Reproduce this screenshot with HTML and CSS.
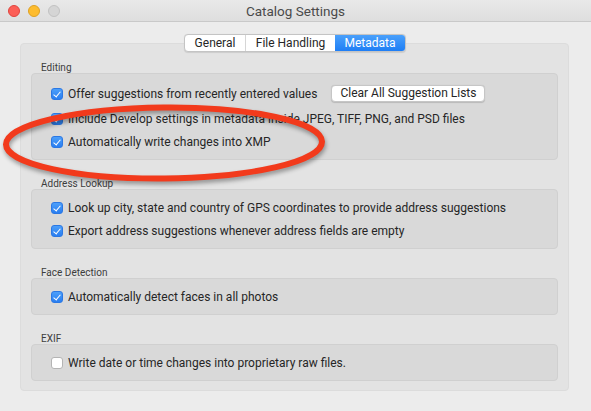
FILE: index.html
```html
<!DOCTYPE html>
<html lang="en">
<head>
<meta charset="utf-8">
<title>Catalog Settings</title>
<link rel="stylesheet" href="styles.css">
</head>
<body>
<div class="window">
  <div class="titlebar">
    <div class="lights">
      <span class="light red"></span>
      <span class="light yellow"></span>
      <span class="light gray"></span>
    </div>
    <div class="title">Catalog Settings</div>
  </div>
  <div class="content">
    <div class="tabs">
      <span class="tab tab-general">General</span>
      <span class="tab tab-file">File Handling</span>
      <span class="tab tab-meta active">Metadata</span>
    </div>
    <div class="panel">
      <section class="section">
        <div class="label">Editing</div>
        <div class="group">
          <div class="row row-first">
            <span class="cb on"></span><span class="text">Offer suggestions from recently entered values</span>
            <button class="btn">Clear All Suggestion Lists</button>
          </div>
          <div class="row"><span class="cb on"></span><span class="text">Include Develop settings in metadata inside JPEG, TIFF, PNG, and PSD files</span></div>
          <div class="row"><span class="cb on"></span><span class="text">Automatically write changes into XMP</span></div>
        </div>
      </section>
      <section class="section">
        <div class="label">Address Lookup</div>
        <div class="group">
          <div class="row"><span class="cb on"></span><span class="text">Look up city, state and country of GPS coordinates to provide address suggestions</span></div>
          <div class="row"><span class="cb on"></span><span class="text">Export address suggestions whenever address fields are empty</span></div>
        </div>
      </section>
      <section class="section">
        <div class="label">Face Detection</div>
        <div class="group">
          <div class="row"><span class="cb on"></span><span class="text">Automatically detect faces in all photos</span></div>
        </div>
      </section>
      <section class="section">
        <div class="label">EXIF</div>
        <div class="group">
          <div class="row"><span class="cb"></span><span class="text">Write date or time changes into proprietary raw files.</span></div>
        </div>
      </section>
    </div>
  </div>
  <svg class="annotation" width="591" height="411" viewBox="0 0 591 411">
    <ellipse cx="164" cy="143" rx="158" ry="35.5" fill="none" stroke="#f23a1c" stroke-width="6" transform="rotate(-0.5 164 143)"/>
  </svg>
</div>
</body>
</html>
```
FILE: styles.css
```css
html, body {
  margin: 0;
  padding: 0;
}
body {
  width: 591px;
  height: 411px;
  overflow: hidden;
  background: #ececec;
  font-family: Roboto, "Liberation Sans", sans-serif;
  color: #262626;
}
.window {
  position: relative;
  width: 591px;
  height: 411px;
  background: #ececec;
}
.titlebar {
  height: 22px;
  box-sizing: border-box;
  border-bottom: 1px solid #c9c9c9;
  background: linear-gradient(#e9e9e9, #dedede);
  display: flex;
  align-items: center;
  position: relative;
}
.lights {
  display: flex;
  gap: 8px;
  padding-left: 8px;
  position: absolute;
  left: 0;
  top: 5px;
}
.light {
  width: 12px;
  height: 12px;
  border-radius: 50%;
  box-sizing: border-box;
}
.red { background: #fc5f57; border: 1px solid #e0443e; }
.yellow { background: #fdbc2e; border: 1px solid #dea123; }
.gray { background: #d5d5d5; border: 1px solid #c2c2c2; }
.title {
  flex: 1;
  text-align: center;
  font-size: 13.5px;
  color: #4a4a4a;
  padding-left: 0;
}
.content {
  padding: 12px 22px 0 20px;
  display: flex;
  flex-direction: column;
  align-items: center;
}
.tabs {
  display: flex;
  height: 18px;
  box-sizing: border-box;
  border: 1px solid #c4c4c4;
  border-radius: 4px;
  background: #fff;
  position: relative;
  z-index: 1;
  margin-bottom: -9px;
  margin-left: 1px;
  overflow: hidden;
  box-shadow: 0 0.5px 1px rgba(0,0,0,0.1);
}
.tab {
  font-size: 12px;
  line-height: 16px;
  text-align: center;
  color: #262626;
  box-sizing: border-box;
}
.tab-general { width: 61px; border-right: 1px solid #d6d6d6; }
.tab-file { width: 89px; }
.tab-meta { width: 70px; }
.tab.active {
  background: linear-gradient(#4aa0fb, #1e7ef5);
  color: #fff;
}
.panel {
  align-self: stretch;
  height: 348px;
  box-sizing: border-box;
  background: #e3e3e3;
  border: 1px solid #dcdcdc;
  border-radius: 4px;
  padding: 19px 10px 0 10px;
  display: flex;
  flex-direction: column;
  gap: 19px;
}
.label {
  font-size: 10px;
  line-height: 10px;
  color: #3d3d3d;
  padding-left: 10px;
}
.group {
  background: #d9d9d9;
  border: 1px solid #d0d0d0;
  border-radius: 4px;
  padding: 6px 0 6px 19px;
}
.row {
  height: 23px;
  display: flex;
  align-items: center;
}
.row-first { height: 27px; }
.cb {
  width: 12px;
  height: 12px;
  box-sizing: border-box;
  border-radius: 3px;
  background: #fff;
  border: 1px solid #b4b4b4;
  margin-right: 5px;
  flex: none;
  position: relative;
}
.cb.on {
  background: linear-gradient(#4c9ffa, #2a7ef0);
  border: 1px solid #2b78e4;
}
.cb.on::after {
  content: "";
  position: absolute;
  left: 3px;
  top: 1px;
  width: 3px;
  height: 6px;
  border-right: 1.6px solid #fff;
  border-bottom: 1.6px solid #fff;
  transform: rotate(40deg);
}
.text {
  font-size: 12px;
  white-space: nowrap;
}
.btn {
  margin-left: 14px;
  height: 17px;
  width: 154px;
  padding: 0;
  font-family: inherit;
  font-size: 12px;
  color: #262626;
  background: #fff;
  border: 1px solid #c6c6c6;
  border-radius: 4px;
  box-shadow: 0 0.5px 1px rgba(0,0,0,0.15);
  line-height: 15px;
}
.annotation {
  position: absolute;
  left: 0;
  top: 0;
  pointer-events: none;
  filter: drop-shadow(1px 3px 2px rgba(0,0,0,0.35));
}
```
